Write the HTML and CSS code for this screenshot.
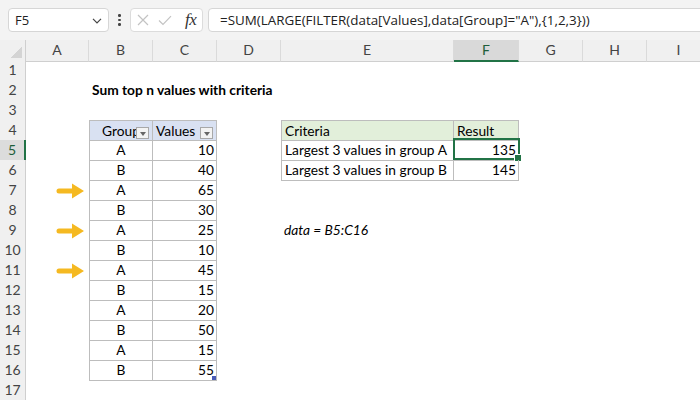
FILE: index.html
```html
<!DOCTYPE html>
<html>
<head>
<meta charset="utf-8">
<link rel="stylesheet" href="styles.css">
</head>
<body>
<div class="toolbar">
  <div class="namebox"><span>F5</span><svg class="chev" width="10" height="6" viewBox="0 0 10 6"><path d="M1 0.8 L5 4.8 L9 0.8" fill="none" stroke="#444" stroke-width="1.2"/></svg></div>
  <div class="dots"><i></i><i></i><i></i></div>
  <div class="fxbox">
    <svg width="12" height="12" viewBox="0 0 12 12"><path d="M1 1 L11 11 M11 1 L1 11" stroke="#c3c3c3" stroke-width="1.2" fill="none"/></svg>
    <svg class="chk" width="14" height="11" viewBox="0 0 14 11"><path d="M1 5.5 L5 9.5 L13 1.2" stroke="#c3c3c3" stroke-width="1.2" fill="none"/></svg>
    <span class="fx">fx</span>
  </div>
  <div class="formula">=SUM(LARGE(FILTER(data[Values],data[Group]="A"),{1,2,3}))</div>
</div>
<div class="sheet">
  <div class="row head"><div class="corner"><span class="tri"></span></div><div class="ch">A</div><div class="ch">B</div><div class="ch">C</div><div class="ch">D</div><div class="ch">E</div><div class="ch selcol">F</div><div class="ch">G</div><div class="ch">H</div><div class="ch">I</div></div>
  <div class="row"><div class="rh">1</div></div>
  <div class="row"><div class="rh">2</div><div class="c"></div><div class="c title">Sum top n values with criteria</div></div>
  <div class="row"><div class="rh">3</div></div>
  <div class="row"><div class="rh">4</div><div class="c"></div><div class="c ctr b bl bt hb">Group<span class="dd"></span></div><div class="c b bt hb">Values<span class="dd"></span></div><div class="c"></div><div class="c b bl bt hg">Criteria</div><div class="c b bt hg">Result</div></div>
  <div class="row"><div class="rh selrow">5</div><div class="c"></div><div class="c ctr b bl">A</div><div class="c num b">10</div><div class="c"></div><div class="c b bl">Largest 3 values in group A</div><div class="c num b">135<span class="sel"><span class="handle"></span></span></div></div>
  <div class="row"><div class="rh">6</div><div class="c"></div><div class="c ctr b bl">B</div><div class="c num b">40</div><div class="c"></div><div class="c b bl">Largest 3 values in group B</div><div class="c num b">145</div></div>
  <div class="row"><div class="rh">7</div><div class="c arr"><svg width="28" height="16" viewBox="0 0 28 16"><path d="M3 5.5 H16 V0.5 L28 8 L16 15.5 V10.5 H3 A2.5 2.5 0 0 1 3 5.5 Z" fill="#f5b921"/></svg></div><div class="c ctr b bl">A</div><div class="c num b">65</div></div>
  <div class="row"><div class="rh">8</div><div class="c"></div><div class="c ctr b bl">B</div><div class="c num b">30</div></div>
  <div class="row"><div class="rh">9</div><div class="c arr"><svg width="28" height="16" viewBox="0 0 28 16"><path d="M3 5.5 H16 V0.5 L28 8 L16 15.5 V10.5 H3 A2.5 2.5 0 0 1 3 5.5 Z" fill="#f5b921"/></svg></div><div class="c ctr b bl">A</div><div class="c num b">25</div><div class="c"></div><div class="c ital">data = B5:C16</div></div>
  <div class="row"><div class="rh">10</div><div class="c"></div><div class="c ctr b bl">B</div><div class="c num b">10</div></div>
  <div class="row"><div class="rh">11</div><div class="c arr"><svg width="28" height="16" viewBox="0 0 28 16"><path d="M3 5.5 H16 V0.5 L28 8 L16 15.5 V10.5 H3 A2.5 2.5 0 0 1 3 5.5 Z" fill="#f5b921"/></svg></div><div class="c ctr b bl">A</div><div class="c num b">45</div></div>
  <div class="row"><div class="rh">12</div><div class="c"></div><div class="c ctr b bl">B</div><div class="c num b">15</div></div>
  <div class="row"><div class="rh">13</div><div class="c"></div><div class="c ctr b bl">A</div><div class="c num b">20</div></div>
  <div class="row"><div class="rh">14</div><div class="c"></div><div class="c ctr b bl">B</div><div class="c num b">50</div></div>
  <div class="row"><div class="rh">15</div><div class="c"></div><div class="c ctr b bl">A</div><div class="c num b">15</div></div>
  <div class="row"><div class="rh">16</div><div class="c"></div><div class="c ctr b bl">B</div><div class="c num b">55<span class="rz"></span></div></div>
  <div class="row"><div class="rh">17</div></div>
</div>
</body>
</html>
```
FILE: styles.css
```css
* { box-sizing: border-box; }
html, body { margin: 0; padding: 0; }
body {
  width: 700px;
  height: 400px;
  overflow: hidden;
  background: #fff;
  color: #000;
  font-family: Lato, "Liberation Sans", sans-serif;
  font-size: 13.75px;
}
.toolbar {
  height: 40px;
  background: #f3f3f3;
  display: flex;
  align-items: center;
  padding-left: 8px;
  overflow: hidden;
}
.namebox {
  width: 101px;
  height: 24px;
  flex: none;
  background: #fff;
  border: 1px solid #d6d6d6;
  border-radius: 4px;
  display: flex;
  align-items: center;
  justify-content: space-between;
  padding: 0 6px 0 6px;
  font-family: "Open Sans", "Liberation Sans", sans-serif;
  font-size: 13px;
  color: #222;
}
.chev { margin-top: 2px; }
.dots {
  width: 21px;
  flex: none;
  display: flex;
  flex-direction: column;
  align-items: center;
  gap: 2px;
}
.dots i {
  display: block;
  width: 2.5px;
  height: 2.5px;
  border-radius: 50%;
  background: #444;
}
.fxbox {
  width: 73px;
  height: 24px;
  flex: none;
  background: #fff;
  border: 1px solid #dcdcdc;
  border-radius: 4px;
  display: flex;
  align-items: center;
  padding-left: 6px;
}
.chk { margin-left: 9px; }
.fx {
  margin-left: 13px;
  font-family: "Liberation Serif", serif;
  font-style: italic;
  font-size: 17px;
  color: #333;
  letter-spacing: -0.5px;
}
.formula {
  flex: none;
  width: 510px;
  height: 24px;
  margin-left: 5px;
  background: #fff;
  border: 1px solid #d6d6d6;
  border-radius: 4px;
  padding-left: 11px;
  line-height: 22px;
  white-space: nowrap;
  font-family: "Open Sans", "Liberation Sans", sans-serif;
  font-size: 13.4px;
  color: #222;
}
.row {
  display: grid;
  grid-template-columns: 26px 63px 64px 64px 64px 173px 65px 64px 64px 64px;
  height: 20px;
}
.head .ch, .corner {
  background: #f0f0f0;
  border-bottom: 1px solid #cfcfcf;
  border-right: 1px solid #dadada;
  text-align: center;
  line-height: 20px;
  color: #444;
  font-size: 14px;
}
.corner {
  border-right: 1px solid #cfcfcf;
  display: flex;
  align-items: flex-end;
  justify-content: flex-end;
  padding: 0 3px 3px 0;
}
.tri {
  width: 12px;
  height: 12px;
  background: linear-gradient(to top left, #d4d4d4 50%, transparent 50%);
}
.ch.selcol {
  background: #d9d9d9;
  border-bottom: 2px solid #217346;
  color: #1e5e3a;
}
.rh {
  background: #f0f0f0;
  border-right: 1px solid #cfcfcf;
  border-bottom: 1px solid #dedede;
  text-align: center;
  line-height: 20px;
  color: #444;
  font-size: 14px;
}
.rh.selrow {
  background: #dcdcdc;
  border-right: 2px solid #217346;
  color: #1e5e3a;
}
.c {
  position: relative;
  padding: 0 3px;
  line-height: 20px;
  white-space: nowrap;
}
.ctr { text-align: center; }
.num { text-align: right; padding-right: 2px; }
.b { border-right: 1px solid #bdbdbd; border-bottom: 1px solid #bdbdbd; }
.bl { border-left: 1px solid #bdbdbd; }
.bt { border-top: 1px solid #bdbdbd; line-height: 19px; }
.hb { background: #d9e1f2; }
.hg { background: #e2efda; }
.title { font-weight: bold; overflow: visible; }
.ital { font-style: italic; }
.arr { display: flex; align-items: center; padding-left: 30px; }
.arr svg { display: block; }
.dd {
  position: absolute;
  right: 3px;
  top: 6px;
  width: 13px;
  height: 12px;
  background: #f3f3f3;
  border: 1px solid #a8a8a8;
}
.dd::after {
  content: "";
  position: absolute;
  left: 3px;
  top: 4px;
  border-left: 3px solid transparent;
  border-right: 3px solid transparent;
  border-top: 4px solid #666;
}
.sel {
  position: absolute;
  left: -1px;
  top: -2px;
  width: 67px;
  height: 22px;
  border: 2px solid #217346;
}
.handle {
  position: absolute;
  right: -4px;
  bottom: -4px;
  width: 6px;
  height: 6px;
  background: #217346;
  border: 1px solid #fff;
  box-sizing: content-box;
}
.rz {
  position: absolute;
  right: 0;
  bottom: 0;
  width: 4px;
  height: 4px;
  background: #4a5bb6;
}
```
